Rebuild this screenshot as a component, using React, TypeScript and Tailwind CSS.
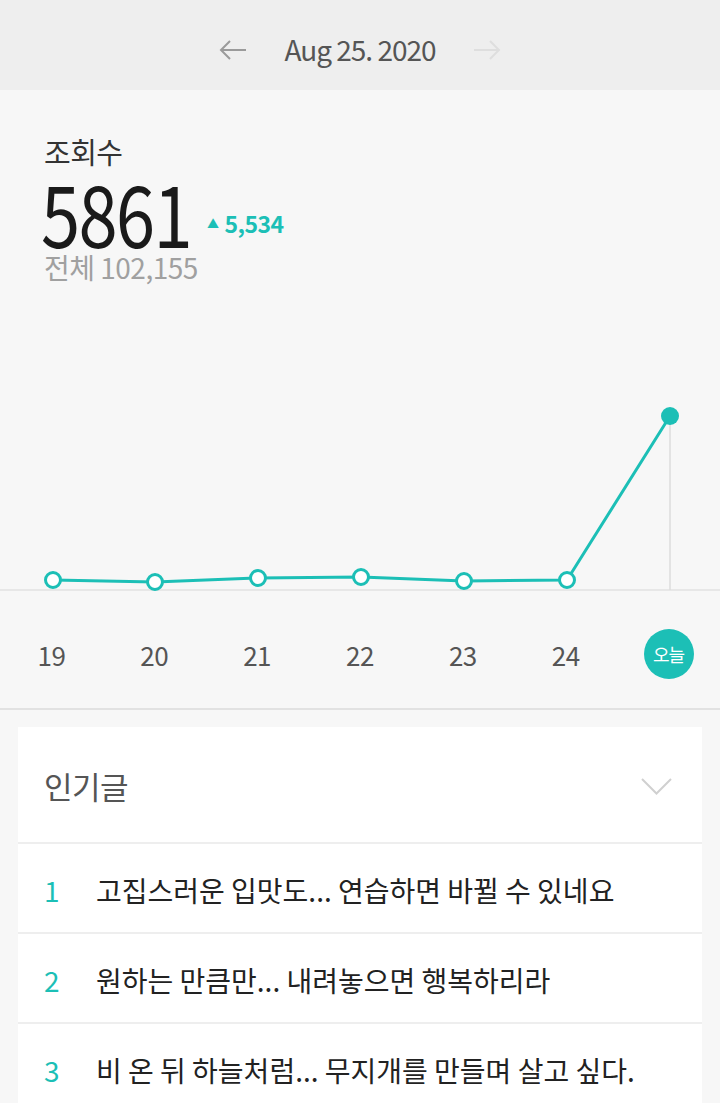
import React from "react";

const TEAL = "#1cbfb6";

const points = [
  { x: 53, y: 580 },
  { x: 155, y: 582 },
  { x: 258, y: 578 },
  { x: 361, y: 577 },
  { x: 464, y: 581 },
  { x: 567, y: 580 },
  { x: 670, y: 416 },
];

const days = ["19", "20", "21", "22", "23", "24"];

const posts = [
  "고집스러운 입맛도... 연습하면 바뀔 수 있네요",
  "원하는 만큼만... 내려놓으면 행복하리라",
  "비 온 뒤 하늘처럼... 무지개를 만들며 살고 싶다.",
];

// chart svg covers page y 300..592
const TOP = 300;

function Chart() {
  const line = points.map((p) => `${p.x},${p.y - TOP}`).join(" ");
  const last = points[points.length - 1];
  return (
    <svg width="720" height="292" viewBox="0 0 720 292" className="block">
      <line x1="0" y1="290" x2="720" y2="290" stroke="#e2e2e2" strokeWidth="1.5" />
      <line x1={last.x} y1={last.y - TOP} x2={last.x} y2="290" stroke="#dcdcdc" strokeWidth="1.5" />
      <polyline points={line} fill="none" stroke={TEAL} strokeWidth="3" strokeLinejoin="round" />
      {points.slice(0, -1).map((p) => (
        <circle key={p.x} cx={p.x} cy={p.y - TOP} r="7.5" fill="#fff" stroke={TEAL} strokeWidth="3" />
      ))}
      <circle cx={last.x} cy={last.y - TOP} r="9" fill={TEAL} />
    </svg>
  );
}

export default function App() {
  return (
    <div
      className="w-[720px] h-[1103px] overflow-hidden bg-[#f7f7f7] text-[#222]"
      style={{ fontFamily: '"Noto Sans CJK KR", "Noto Sans", sans-serif' }}
    >
      {/* date header */}
      <div className="h-[90px] bg-[#eeeeee] flex items-center justify-center gap-[36px] pt-[10px]">
        <svg width="30" height="22" viewBox="0 0 30 22" fill="none" stroke="#9a9a9a" strokeWidth="2">
          <path d="M28 11H3M12 2L3 11l9 9" />
        </svg>
        <span className="text-[28px] tracking-[-1px] text-[#555] leading-none pb-[2px]">Aug 25. 2020</span>
        <svg width="30" height="22" viewBox="0 0 30 22" fill="none" stroke="#dedede" strokeWidth="2">
          <path d="M2 11h25M18 2l9 9-9 9" />
        </svg>
      </div>

      {/* stats */}
      <div className="h-[210px] px-[44px] pt-[42px]">
        <div className="text-[29px] leading-[38px] text-[#333] tracking-[-0.5px]">조회수</div>
        <div className="flex items-end mt-[1px]">
          <span className="inline-block origin-left scale-x-[0.82] ml-[-3px] mr-[-35px] text-[86px] leading-[80px] tracking-[-2px] text-[#1a1a1a]">
            5861
          </span>
          <span className="flex items-center gap-[6px] ml-[18px] pb-[16px] font-bold text-[23px] leading-none tracking-[-0.5px]" style={{ color: TEAL }}>
            <span className="text-[12px]">▲</span>5,534
          </span>
        </div>
        <div className="text-[28px] leading-[28px] mt-[2px] text-[#a0a0a0] tracking-[-0.5px]">전체 102,155</div>
      </div>

      <Chart />

      {/* day labels */}
      <div className="h-[118px] grid grid-cols-7 items-center pt-[8px] border-b-2 border-[#e2e2e2]">
        {days.map((d) => (
          <div key={d} className="text-center text-[26px] text-[#555] tracking-[-0.5px]">
            {d}
          </div>
        ))}
        <div className="flex justify-center">
          <div className="w-[50px] h-[50px] rounded-full flex items-center justify-center text-white text-[18px] tracking-[-1px]" style={{ backgroundColor: TEAL }}>
            오늘
          </div>
        </div>
      </div>

      {/* popular posts */}
      <div className="pt-[17px] px-[18px]">
        <div className="bg-white">
          <div className="h-[117px] flex items-center justify-between pl-[26px] pr-[30px] pt-[4px] border-b-2 border-[#eeeeee]">
            <span className="text-[31px] text-[#555] tracking-[-0.5px]">인기글</span>
            <svg width="31" height="17" viewBox="0 0 31 17" fill="none" stroke="#d0d0d0" strokeWidth="2">
              <path d="M1 1l14.5 14.5L30 1" />
            </svg>
          </div>
          {posts.map((t, i) => (
            <div key={i} className="h-[90px] flex items-center pl-[26px] pt-[4px] border-b-2 border-[#eeeeee]">
              <span className="w-[52px] text-[28px]" style={{ color: TEAL }}>
                {i + 1}
              </span>
              <span className="text-[28px] text-[#222]">{t}</span>
            </div>
          ))}
        </div>
      </div>
    </div>
  );
}
